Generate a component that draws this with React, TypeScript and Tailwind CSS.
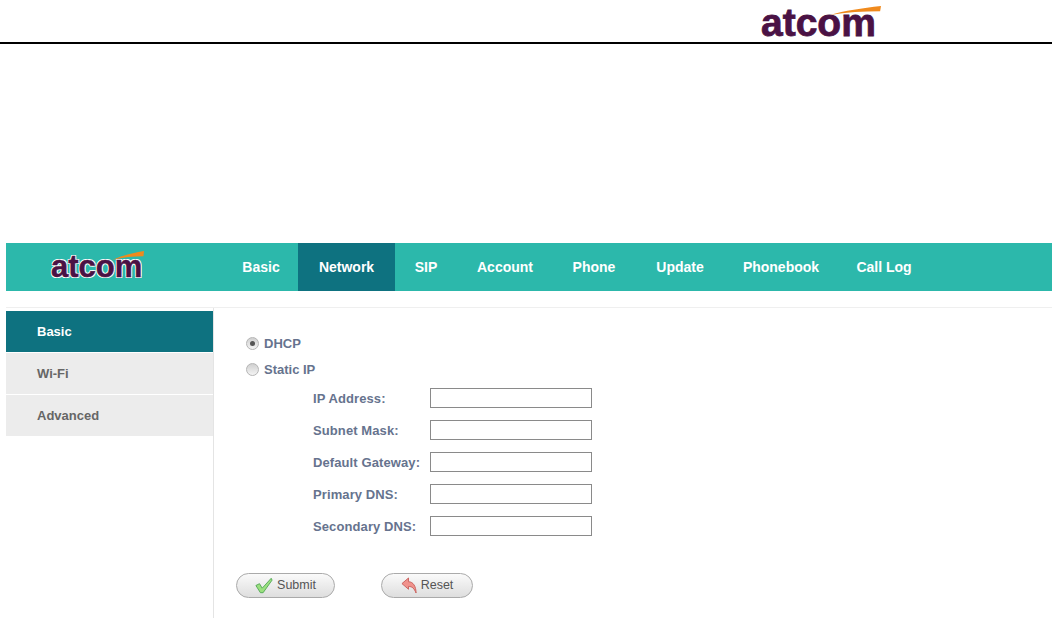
import React from 'react';

const navItems = ['Basic', 'Network', 'SIP', 'Account', 'Phone', 'Update', 'Phonebook', 'Call Log'];
const navWidths = ['w-[74px]', 'w-[97px]', 'w-[62px]', 'w-[96px]', 'w-[82px]', 'w-[90px]', 'w-[112px]', 'w-[94px]'];
const sideItems = ['Basic', 'Wi-Fi', 'Advanced'];
const fields = ['IP Address:', 'Subnet Mask:', 'Default Gateway:', 'Primary DNS:', 'Secondary DNS:'];

const Swoosh = ({ className }: { className: string }) => (
  <svg className={className} viewBox="0 0 60 12" preserveAspectRatio="none">
    <path d="M1 12 C18 6 38 3 60 0 L59 7 C40 7 20 8 1 12 Z" fill="#f08a1d" />
  </svg>
);

const Radio = ({ checked }: { checked?: boolean }) => (
  <span className="w-[13px] h-[13px] mb-[2px] rounded-full border border-[#b5b5b5] bg-gradient-to-b from-[#d0d0d0] to-[#f4f4f4] flex items-center justify-center shrink-0">
    {checked && <span className="w-[5px] h-[5px] rounded-full bg-[#555]" />}
  </span>
);

export default function App() {
  return (
    <div className="w-[1052px] h-[618px] bg-white overflow-hidden font-['Liberation_Sans',sans-serif]">
      <div className="h-[44px] border-b-2 border-black flex justify-end pr-[171px]">
        <div className="relative w-[122px] h-[42px]">
          <span className="absolute left-[2px] top-[3px] text-[39px] leading-[40px] font-bold text-[#4a1244] [-webkit-text-stroke:0.8px_#4a1244]">atcom</span>
          <Swoosh className="absolute left-[70px] top-[6px] w-[52px] h-[9px]" />
        </div>
      </div>

      <div className="mt-[199px] ml-[6px] h-[48px] bg-[#2cb8ab] flex">
        <div className="w-[218px] relative">
          <span className="absolute left-[45px] top-[6px] text-[31px] leading-[36px] font-bold text-[#4a1244] [-webkit-text-stroke:0.5px_#4a1244] [text-shadow:1px_1px_0_#fff,-1px_-1px_0_#fff,1px_-1px_0_#fff,-1px_1px_0_#fff]">atcom</span>
          <Swoosh className="absolute left-[106px] top-[8px] w-[32px] h-[9px]" />
        </div>
        {navItems.map((item, i) => (
          <div
            key={item}
            className={`${navWidths[i]} flex items-center justify-center text-[14px] font-bold text-white ${item === 'Network' ? 'bg-[#0e7280]' : ''}`}
          >
            {item}
          </div>
        ))}
      </div>

      <div className="mt-[16px] ml-[6px] border-t border-[#efefef] flex h-[311px]">
        <div className="w-[208px] shrink-0 border-r border-[#e4e4e4] pt-[3px]">
          <div className="w-[207px] flex flex-col gap-[1px]">
            {sideItems.map((item, i) => (
              <div
                key={item}
                className={`h-[41px] flex items-center pl-[31px] text-[13px] font-bold ${i === 0 ? 'bg-[#0e7280] text-white' : 'bg-[#ececec] text-[#666]'}`}
              >
                {item}
              </div>
            ))}
          </div>
        </div>

        <div className="pl-[32px] pt-[28px] text-[13px] font-bold text-[#66738e]">
          <div className="flex items-center gap-[5px] h-[16px]"><Radio checked />DHCP</div>
          <div className="flex items-center gap-[5px] h-[16px] mt-[10px]"><Radio />Static IP</div>
          <div className="mt-[10px] ml-[67px] flex flex-col gap-[12px] tracking-[0.1px]">
            {fields.map((f) => (
              <div key={f} className="flex items-center h-[20px]">
                <span className="w-[117px] shrink-0 pt-[1px]">{f}</span>
                <span className="w-[162px] h-[20px] border border-[#8a8a8a] bg-white" />
              </div>
            ))}
          </div>
          <div className="mt-[37px] ml-[-10px] flex gap-[46px] font-normal text-[12.5px] text-[#555]">
            <button className="w-[99px] h-[25px] rounded-full border border-[#aaa] bg-gradient-to-b from-[#fafafa] to-[#dedede] flex items-center justify-center gap-[4px]">
              <svg className="w-[18px] h-[17px]" viewBox="0 0 20 18">
                <path d="M1 9 L5 7 L8 12 L18 1 L19 3 L9 17 L6 17 Z" fill="#9be07f" stroke="#4fa654" strokeWidth="1" />
              </svg>
              Submit
            </button>
            <button className="w-[92px] h-[25px] rounded-full border border-[#aaa] bg-gradient-to-b from-[#fafafa] to-[#dedede] flex items-center justify-center gap-[4px]">
              <svg className="w-[16px] h-[17px]" viewBox="0 0 17 18">
                <path d="M1 7 L8 1 L8 5 C13 5 16 10 16 17 C14 12 12 10 8 10 L8 13 Z" fill="#f0928c" stroke="#c9605c" strokeWidth="1" />
              </svg>
              Reset
            </button>
          </div>
        </div>
      </div>
    </div>
  );
}
